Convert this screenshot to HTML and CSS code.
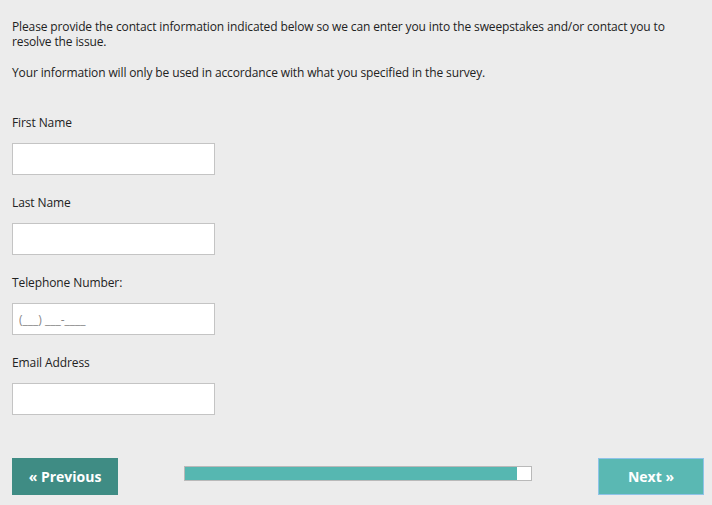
FILE: index.html
```html
<!DOCTYPE html>
<html lang="en">
<head>
  <meta charset="UTF-8">
  <meta name="viewport" content="width=device-width, initial-scale=1.0">
  <title>Contact Information</title>
  <link rel="stylesheet" href="styles.css">
</head>
<body>
  <div class="survey">
    <p class="intro">Please provide the contact information indicated below so we can enter you into the sweepstakes and/or contact you to resolve the issue.</p>
    <p class="intro">Your information will only be used in accordance with what you specified in the survey.</p>

    <div class="campo">
      <label for="firstName">First Name</label>
      <input type="text" id="firstName">
    </div>
    <div class="campo">
      <label for="lastName">Last Name</label>
      <input type="text" id="lastName">
    </div>
    <div class="campo">
      <label for="phone">Telephone Number:</label>
      <input type="text" id="phone" placeholder="(___) ___-____">
    </div>
    <div class="campo">
      <label for="email">Email Address</label>
      <input type="text" id="email">
    </div>

    <div class="navegacao">
      <button class="btn btn-prev">&laquo; Previous</button>
      <div class="progresso"><div class="progresso-barra" style="width: 96%"></div></div>
      <button class="btn btn-next">Next &raquo;</button>
    </div>
  </div>
</body>
</html>
```

FILE: styles.css
```css
body {
  font-family: "Open Sans", Arial, sans-serif;
  background-color: #ececec;
  color: #222;
  margin: 0;
  padding: 0;
}

.survey {
  padding: 19px 12px 0 12px;
  width: 670px;
}

.intro {
  font-size: 12px;
  line-height: 15px;
  letter-spacing: -0.13px;
  margin: 0 0 16px 0;
}

.campo {
  margin-top: 35px;
}

.campo + .campo {
  margin-top: 20px;
}

label {
  display: block;
  font-size: 12px;
  line-height: 15px;
  letter-spacing: -0.1px;
  margin-bottom: 13px;
}

input {
  box-sizing: border-box;
  width: 203px;
  height: 32px;
  border: 1px solid #c4c4c4;
  background-color: #fff;
  padding: 0 6px;
  font-size: 12px;
  font-family: inherit;
}

input::placeholder {
  color: #888;
}

.navegacao {
  display: flex;
  justify-content: space-between;
  align-items: center;
  margin-top: 43px;
  width: 692px;
}

.btn {
  width: 106px;
  height: 37px;
  font-family: "Open Sans", Arial, sans-serif;
  font-size: 14px;
  font-weight: bold;
  color: #fff;
  border: none;
  cursor: pointer;
}

.btn-prev {
  background-color: #3f8c84;
}

.btn-next {
  background-color: #5ab8b3;
  border: 1px solid #8ec3e8;
}

.progresso {
  width: 346px;
  height: 13px;
  margin-bottom: 7px;
  background-color: #fff;
  border: 1px solid #b9b9b9;
}

.progresso-barra {
  height: 100%;
  background-color: #56b7b1;
}
```
